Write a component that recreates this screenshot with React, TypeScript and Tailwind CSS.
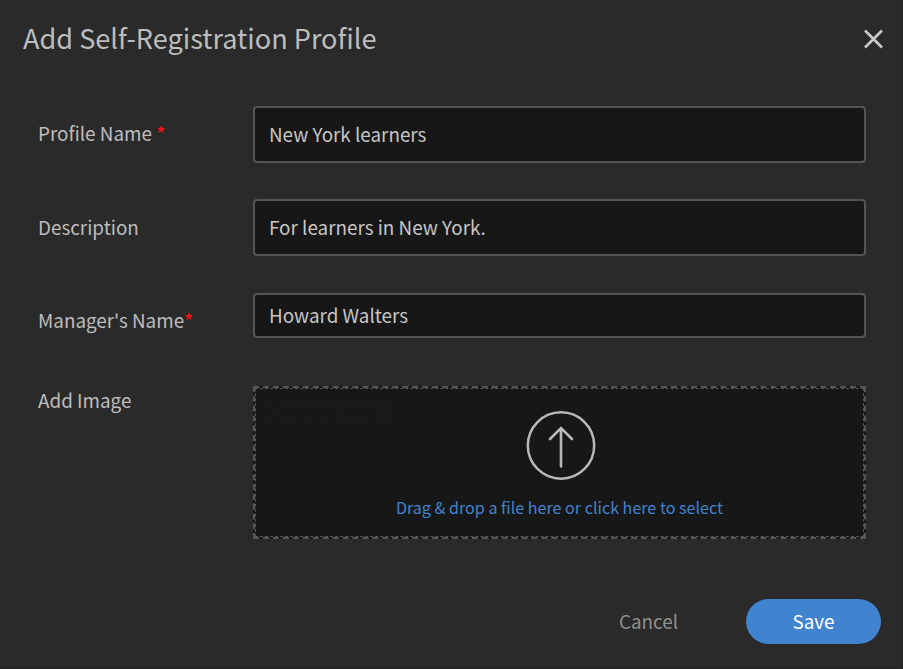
import type { ReactNode } from "react";

function Label({ children, className }: { children: ReactNode; className: string }) {
  return (
    <div className={`w-[215px] shrink-0 text-[18.85px] leading-6 text-[#bdbdbd] ${className}`}>
      {children}
    </div>
  );
}

function Field({ value, className }: { value: string; className: string }) {
  return (
    <div
      className={`w-[613px] shrink-0 rounded-[4px] border-2 border-[#555555] bg-[#171717] pl-[14px] text-[18.85px] leading-6 text-[#c6c6c6] ${className}`}
    >
      {value}
    </div>
  );
}

export default function App() {
  return (
    <div className="flex h-[669px] w-[903px] flex-col overflow-hidden border-r border-b border-[#242424] bg-[#2a2a2a] font-['Noto_Sans_CJK_SC','Noto_Sans',sans-serif] whitespace-nowrap">
      <header className="flex h-[106px] shrink-0 justify-between pt-[20px] pr-[18px] pl-[23px]">
        <h1 className="text-[27.1px] leading-9 text-[#bdbdbd]">Add Self-Registration Profile</h1>
        <button aria-label="Close" className="mt-[9px] h-5 w-5">
          <svg viewBox="0 0 20 20" className="h-5 w-5" fill="none" stroke="#c8c8c8" strokeWidth="2.7">
            <path d="M1 1.5 18 18.5M18 1.5 1 18.5" />
          </svg>
        </button>
      </header>

      <main className="flex shrink-0 flex-col pl-[38px]">
        <div className="flex h-[93px]">
          <Label className="pt-[15px]">
            Profile Name <span className="font-medium text-[#ee1414]">*</span>
          </Label>
          <Field value="New York learners" className="h-[57px] pt-[14px]" />
        </div>
        <div className="flex h-[94px]">
          <Label className="pt-[16px]">Description</Label>
          <Field value="For learners in New York." className="h-[57px] pt-[14px]" />
        </div>
        <div className="flex h-[93px]">
          <Label className="pt-[15px]">
            Manager&apos;s Name<span className="font-medium text-[#ee1414]">*</span>
          </Label>
          <Field value="Howard Walters" className="h-[45px] pt-[8px]" />
        </div>
        <div className="flex h-[153px]">
          <Label className="pt-[2px]">Add Image</Label>
          <div className="h-[153px] w-[613px] shrink-0 border-2 border-dashed border-[#555555] bg-[#171717]">
            <div className="relative flex h-full flex-col items-center border border-dashed border-[#555555] pt-[21px]">
              <div className="absolute top-[8px] left-[8px] flex items-center font-['Liberation_Sans',sans-serif] text-[19px] leading-[31px] text-[#161616]">
                <span className="w-[128px] bg-[#181818] pl-[5px] tracking-[0.6px]">Choose File</span>
                <span className="pl-[7px]">No file chosen</span>
              </div>
              <svg viewBox="0 0 70 70" className="relative left-[1px] h-[70px] w-[70px]" fill="none" stroke="#b8b8b8">
                <circle cx="35" cy="35.5" r="33.2" strokeWidth="2.5" />
                <path d="M35 56.5V18M24 29 35 18 46 29" strokeWidth="2.6" strokeLinecap="round" />
              </svg>
              <div className="mt-[15px] text-[16.1px] leading-6 text-[#4083cf]">
                Drag &amp; drop a file here or click here to select
              </div>
            </div>
          </div>
        </div>
      </main>

      <footer className="flex h-[105px] shrink-0 justify-end pt-[60px] pr-[21px]">
        <button className="mr-[68px] h-[45px] pb-[2px] text-[18.85px] leading-[43px] text-[#8f8f8f]">Cancel</button>
        <button className="h-[45px] w-[135px] rounded-full bg-[#4083cf] pb-[2px] text-[18.85px] leading-[43px] text-white">
          Save
        </button>
      </footer>
    </div>
  );
}
